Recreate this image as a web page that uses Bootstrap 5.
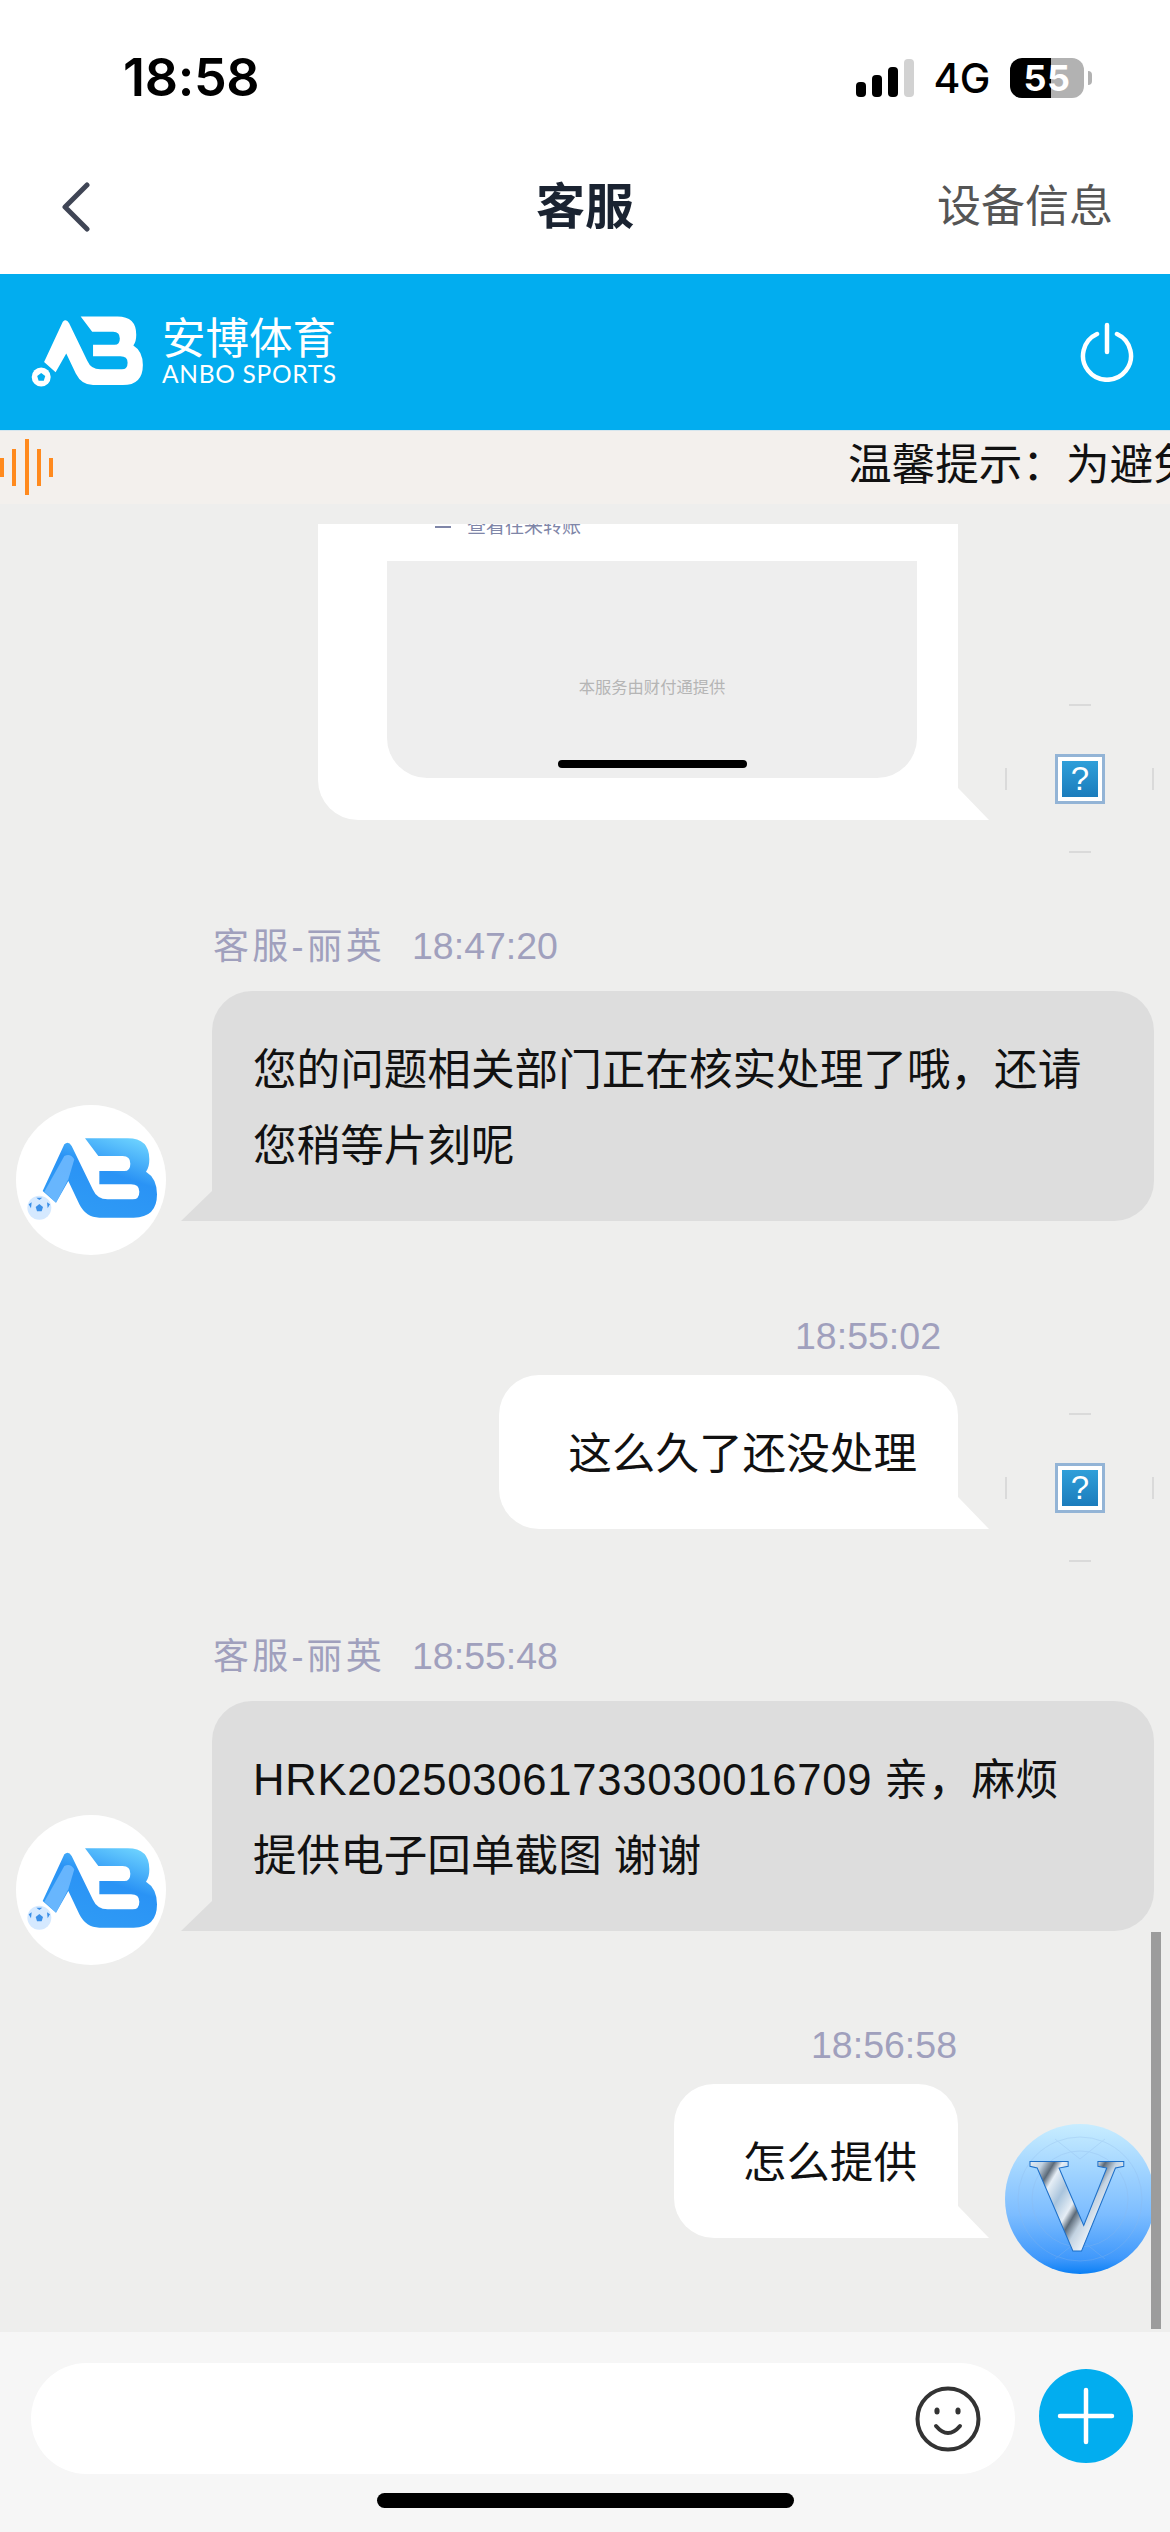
<!DOCTYPE html>
<html lang="zh-CN">
<head>
<meta charset="utf-8">
<title>客服</title>
<link href="https://cdn.jsdelivr.net/npm/bootstrap@5.3.0/dist/css/bootstrap.min.css" rel="stylesheet">
<style>
html,body{margin:0;background:#fff}
body{width:1170px;height:2532px;overflow:hidden;font-family:"Liberation Sans","Noto Sans CJK SC",sans-serif;color:#111}
.screen{height:2532px}
.status{height:156px;padding:0 78px 0 123px}
.clock{font-family:Inter,sans-serif;font-weight:600;font-size:52px;color:#000;letter-spacing:-.3px;line-height:1}
.sig{gap:6px;height:38px;width:58px}
.sig i{display:block;width:10px;background:#000;border-radius:4px}
.s1{height:15px}.s2{height:22px}.s3{height:30px}.s4{height:38px;background:#d2d2d2!important}
.net{font-family:Inter,sans-serif;font-weight:500;font-size:41px;line-height:1;color:#000;margin:0 20px 0 19px;letter-spacing:-.5px}
.batt{width:74px;height:40px;border-radius:12px;background:linear-gradient(90deg,#000 55.4%,#b2b2b2 55.4%);color:#fff;font-family:Inter,sans-serif;font-weight:700;font-size:36px;line-height:40px;text-align:center;letter-spacing:.5px}
.nub{width:4px;height:14px;background:#b2b2b2;border-radius:0 4px 4px 0;margin-left:4px}
.topnav{height:118px;padding-bottom:16px}
.back{padding-left:60px;line-height:0}
.ttl{font-size:49px;font-weight:700;color:#1a2331;line-height:1.2}
.devinfo{font-size:44px;color:#555;padding-right:57px;line-height:1.2}
.brandbar{height:156px;background:#02adef;padding:0 36px 0 31px;color:#fff}
.bname{font-family:"Noto Sans CJK SC",sans-serif;font-weight:400;font-size:43.5px;line-height:44px;white-space:nowrap;margin-top:-5px}
.bsub{font-family:Lato,sans-serif;font-weight:400;font-size:24.5px;line-height:22px;letter-spacing:.7px;white-space:nowrap;margin-top:5px}
.brandtxt{margin-left:19px}
.notice{height:74px;background:#f3f0ed;border-top:1px solid #d6e6ee}
.ticker{font-size:43.6px;line-height:1.2;padding-left:795px;white-space:nowrap;overflow:hidden;color:#111;flex:1;margin-top:-5px}
.chat{flex:1 1 0;min-height:0;background:#eeeeed;padding-top:20px;overflow:hidden}
.bub{position:relative;font-size:43.6px;line-height:76px;padding:41px 41px 37px}
.bub-me{background:#fff;border-radius:40px 40px 0 40px;padding-left:69px}
.bub-me::after{content:"";position:absolute;left:100%;bottom:0;width:31px;height:32px;background:#fff;clip-path:polygon(0 0,100% 100%,0 100%)}
.bub-cs{background:#ddd;border-radius:40px 40px 40px 0;width:942px}
.bub-cs::after{content:"";position:absolute;right:100%;bottom:0;width:31px;height:30px;background:#ddd;clip-path:polygon(100% 0,100% 100%,0 100%)}
.rowme{padding-right:15px;gap:47px}
.rowcs{padding-left:16px;gap:46px}
.ava{width:150px;height:150px;flex:none;margin-bottom:-34px;position:relative}
.avav{margin-bottom:-36px}
.meta{height:50px;line-height:50px;font-size:37.5px;color:#a0a0bd;white-space:nowrap}
.metacs{margin-left:213px;margin-bottom:20px}
.nick{font-size:36px;letter-spacing:3.2px;margin-right:27px}
.metame{text-align:right;margin-bottom:14px;padding-right:213px}
.metame2{padding-right:229px}
.gapA{margin-top:101px}.gapB{margin-top:90px}.gapC{margin-top:102px}.gapD{margin-top:89px}
.shot{width:640px;height:296px;background:#fff;border-radius:0 0 0 40px;padding:0 41px 42px 69px;position:relative}
.shot::after{content:"";position:absolute;left:100%;bottom:0;width:31px;height:32px;background:#fff;clip-path:polygon(0 0,100% 100%,0 100%)}
.shotstrip{height:37px;overflow:hidden;padding-left:47px;color:#7f86a8;font-size:19px;line-height:19px;gap:15px}
.shotstrip span,.shotstrip svg{margin-top:-7px}
.panel{width:530px;height:217px;background:#eee;border-radius:0 0 40px 40px;font-size:16.3px;color:#b5b5b5;padding-top:117px;text-align:center;line-height:18px}
.homeshot{width:189px;height:8px;background:#000;border-radius:4px;margin:64px auto 0}
.broken{width:50px;height:50px;border:3px solid #93b4d6;background:#fff;padding:4px}
.brokeni{width:100%;height:100%;background:linear-gradient(#2f9fd9,#1b7cbc);color:#fff;font-size:33px;line-height:36px;text-align:center}
.ticks{position:absolute;inset:0}
.scrollb{position:absolute;left:1151px;top:1428px;width:10px;height:397px;background:#9c9c9c}
.chatwrap{position:relative;flex:1 1 0;min-height:0}
.foot{height:200px;background:#f6f6f6;padding:31px 37px 0 31px}
.inputbox{width:984px;height:111px;background:#fff;border-radius:56px;padding-right:34px}
.plus{width:94px;height:94px;background:#02adef;border-radius:50%;margin-top:6px;margin-left:24px;flex:none}
.homebar{width:417px;height:15px;background:#000;border-radius:8px;margin:19px 0 0 346px}
.orderno{letter-spacing:.75px}
</style>
</head>
<body>
<div class="screen d-flex flex-column">

  <div class="status d-flex align-items-center justify-content-between">
    <div class="clock">18:58</div>
    <div class="d-flex align-items-center">
      <div class="sig d-flex align-items-end"><i class="s1"></i><i class="s2"></i><i class="s3"></i><i class="s4"></i></div>
      <div class="net">4G</div>
      <div class="batt">55</div>
      <div class="nub"></div>
    </div>
  </div>

  <div class="topnav row g-0 align-items-center">
    <div class="col-4 back">
      <svg width="32" height="50" viewBox="0 0 32 50"><path d="M27 3 L5 25 L27 47" fill="none" stroke="#3f4555" stroke-width="5" stroke-linecap="round" stroke-linejoin="round"/></svg>
    </div>
    <div class="col-4 text-center ttl">客服</div>
    <div class="col-4 text-end devinfo">设备信息</div>
  </div>

  <div class="brandbar d-flex align-items-center justify-content-between">
    <div class="d-flex align-items-center">
      <svg width="112" height="72" viewBox="50 150 388 250">
        <defs>
          <path id="abp" d="M222 152 L350 152 Q415 152 415 215 Q415 240 405 252 Q438 272 438 320 Q438 390 368 390 L265 390 Q225 390 205 350 L172 280 L135 345 L95 310 L160 170 Q172 158 182 175 L245 305 Q258 335 290 335 L365 335 Q385 335 385 312 Q385 290 360 290 L265 290 L265 250 L340 250 Q358 250 358 228 Q358 205 335 205 L262 205 Z"/>
          <linearGradient id="abg" x1="0.85" y1="0" x2="0.35" y2="1"><stop offset="0" stop-color="#6fd4ff"/><stop offset=".45" stop-color="#2a93f5"/><stop offset="1" stop-color="#2f9bf5"/></linearGradient>
          <linearGradient id="vbg" x1="0" y1="0" x2="0" y2="1"><stop offset="0" stop-color="#c8edff"/><stop offset=".6" stop-color="#7dbdff"/><stop offset=".9" stop-color="#3f98fb"/><stop offset="1" stop-color="#0a80f5"/></linearGradient>
          <linearGradient id="vtx" gradientUnits="userSpaceOnUse" x1="20" y1="35" x2="62" y2="60" spreadMethod="reflect"><stop offset="0" stop-color="#f4f8fc"/><stop offset=".35" stop-color="#c3d3e2"/><stop offset=".55" stop-color="#5c6a78"/><stop offset=".7" stop-color="#e6eef6"/><stop offset="1" stop-color="#a9c4dc"/></linearGradient>
        </defs>
        <use href="#abp" fill="#fff"/>
        <circle cx="85" cy="362" r="33" fill="#fff"/>
        <polygon points="85,348 99,358 94,375 76,375 71,358" fill="#02adef"/>
      </svg>
      <div class="brandtxt">
        <div class="bname">安博体育</div>
        <div class="bsub">ANBO SPORTS</div>
      </div>
    </div>
    <svg width="54" height="60" viewBox="0 0 54 60" fill="none" stroke="#fff" stroke-width="4.5" stroke-linecap="round"><path d="M27 3 V30"/><path d="M17 12 A24 24 0 1 0 37 12"/></svg>
  </div>

  <div class="notice d-flex align-items-center">
    <svg width="53" height="58" viewBox="0 0 53 58" class="flex-none"><g fill="#ff8a1e"><rect x="0" y="19" width="4" height="19"/><rect x="12" y="10" width="4" height="37"/><rect x="25" y="0" width="4" height="56"/><rect x="37" y="10" width="4" height="37"/><rect x="49" y="19" width="4" height="19"/></g></svg>
    <div class="ticker">温馨提示：为避免</div>
  </div>

  <div class="chatwrap d-flex flex-column">
    <div class="chat">

      <div class="d-flex justify-content-end align-items-end rowme">
        <div class="shot">
          <div class="shotstrip d-flex">
            <svg width="18" height="16" viewBox="0 0 18 16" fill="none" stroke="#7f86a8" stroke-width="2"><path d="M1 4 H17 M1 10 H17"/></svg>
            <span>查看往来转账</span>
          </div>
          <div class="panel">
            本服务由财付通提供
            <div class="homeshot"></div>
          </div>
        </div>
        <div class="ava d-flex align-items-center justify-content-center">
          <svg class="ticks" viewBox="0 0 150 150" fill="none" stroke="#d4d4d4" stroke-width="1.5"><path d="M64 1 H86 M64 148 H86 M1 64 V86 M148 64 V86"/></svg>
          <div class="broken"><div class="brokeni">?</div></div>
        </div>
      </div>

      <div class="gapA">
        <div class="meta metacs"><span class="nick">客服-丽英</span>18:47:20</div>
        <div class="d-flex align-items-end rowcs">
          <div class="ava bg-white rounded-circle">
            <svg width="150" height="150" viewBox="15 52 450 450">
              <use href="#abp" fill="url(#abg)"/>
              <path d="M100 312 L160 205 Q178 195 190 215 L172 275 L135 345 Z" fill="#7cc0ff" opacity=".75"/>
              <circle cx="85" cy="360" r="36" fill="#d5e9ff"/>
              <polygon points="85,349 96,358 92,371 78,371 74,358" fill="#3a8fe8"/>
              <path d="M76 330 L94 330 L85 337Z M53 350 L62 344 L60 362Z M117 350 L108 344 L110 362Z" fill="#3a8fe8"/>
            </svg>
          </div>
          <div class="bub bub-cs">您的问题相关部门正在核实处理了哦，还请<br>您稍等片刻呢</div>
        </div>
      </div>

      <div class="gapB">
        <div class="meta metame metame2">18:55:02</div>
        <div class="d-flex justify-content-end align-items-end rowme">
          <div class="bub bub-me">这么久了还没处理</div>
          <div class="ava d-flex align-items-center justify-content-center">
            <svg class="ticks" viewBox="0 0 150 150" fill="none" stroke="#d4d4d4" stroke-width="1.5"><path d="M64 1 H86 M64 148 H86 M1 64 V86 M148 64 V86"/></svg>
            <div class="broken"><div class="brokeni">?</div></div>
          </div>
        </div>
      </div>

      <div class="gapC">
        <div class="meta metacs"><span class="nick">客服-丽英</span>18:55:48</div>
        <div class="d-flex align-items-end rowcs">
          <div class="ava bg-white rounded-circle">
            <svg width="150" height="150" viewBox="15 52 450 450">
              <use href="#abp" fill="url(#abg)"/>
              <path d="M100 312 L160 205 Q178 195 190 215 L172 275 L135 345 Z" fill="#7cc0ff" opacity=".75"/>
              <circle cx="85" cy="360" r="36" fill="#d5e9ff"/>
              <polygon points="85,349 96,358 92,371 78,371 74,358" fill="#3a8fe8"/>
              <path d="M76 330 L94 330 L85 337Z M53 350 L62 344 L60 362Z M117 350 L108 344 L110 362Z" fill="#3a8fe8"/>
            </svg>
          </div>
          <div class="bub bub-cs"><span class="orderno">HRK202503061733030016709</span> 亲，麻烦<br>提供电子回单截图 谢谢</div>
        </div>
      </div>

      <div class="gapD">
        <div class="meta metame">18:56:58</div>
        <div class="d-flex justify-content-end align-items-end rowme">
          <div class="bub bub-me">怎么提供</div>
          <div class="ava avav">
            <svg width="150" height="150" viewBox="0 0 150 150">
              <circle cx="75" cy="75" r="75" fill="url(#vbg)"/>
              <g fill="none" stroke="#8fb9ea" stroke-width="1" opacity=".3"><circle cx="75" cy="75" r="48"/><circle cx="75" cy="75" r="62"/><path d="M50 15 L75 35 L100 15 M50 135 L75 115 L100 135"/></g>
              <text x="72" y="125" text-anchor="middle" font-family="Liberation Serif" font-weight="700" font-size="134" fill="url(#vtx)" stroke="#1d6fc8" stroke-width="1">V</text>
            </svg>
          </div>
        </div>
      </div>

    </div>
    <div class="scrollb"></div>
  </div>

  <div class="foot">
    <div class="d-flex align-items-start">
      <div class="inputbox d-flex align-items-center justify-content-end">
        <svg width="66" height="66" viewBox="0 0 66 66" fill="none" stroke="#333"><circle cx="33" cy="33" r="30.5" stroke-width="4"/><ellipse cx="22" cy="25" rx="2.6" ry="3.6" fill="#333" stroke="none"/><ellipse cx="43" cy="25" rx="2.6" ry="3.6" fill="#333" stroke="none"/><path d="M21 40 Q33 54 45 40" stroke-width="4" stroke-linecap="round"/></svg>
      </div>
      <div class="plus d-flex align-items-center justify-content-center">
        <svg width="58" height="58" viewBox="0 0 58 58" stroke="#fff" stroke-width="4.5" stroke-linecap="round"><path d="M29 3 V55 M3 29 H55"/></svg>
      </div>
    </div>
    <div class="homebar"></div>
  </div>

</div>
<script src="https://cdn.jsdelivr.net/npm/bootstrap@5.3.0/dist/js/bootstrap.bundle.min.js"></script>
</body>
</html>
